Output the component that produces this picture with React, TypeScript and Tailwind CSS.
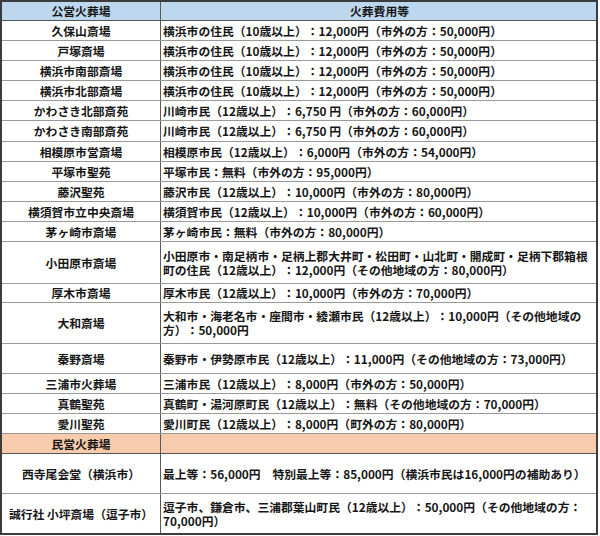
import React from "react";

type Row = {
  name: string;
  fee: React.ReactNode;
  h: string;
  kind?: "blue" | "orange";
  last?: boolean;
};

const rows: Row[] = [
  { name: "公営火葬場", fee: "火葬費用等", h: "h-[19px]", kind: "blue" },
  { name: "久保山斎場", fee: "横浜市の住民（10歳以上）：12,000円（市外の方：50,000円）", h: "h-[20px]" },
  { name: "戸塚斎場", fee: "横浜市の住民（10歳以上）：12,000円（市外の方：50,000円）", h: "h-[20px]" },
  { name: "横浜市南部斎場", fee: "横浜市の住民（10歳以上）：12,000円（市外の方：50,000円）", h: "h-[20px]" },
  { name: "横浜市北部斎場", fee: "横浜市の住民（10歳以上）：12,000円（市外の方：50,000円）", h: "h-[20px]" },
  { name: "かわさき北部斎苑", fee: "川崎市民（12歳以上）：6,750 円（市外の方：60,000円）", h: "h-[20px]" },
  { name: "かわさき南部斎苑", fee: "川崎市民（12歳以上）：6,750 円（市外の方：60,000円）", h: "h-[21px]" },
  { name: "相模原市営斎場", fee: "相模原市民（12歳以上）：6,000円（市外の方：54,000円）", h: "h-[20px]" },
  { name: "平塚市聖苑", fee: "平塚市民：無料（市外の方：95,000円）", h: "h-[20px]" },
  { name: "藤沢聖苑", fee: "藤沢市民（12歳以上）：10,000円（市外の方：80,000円）", h: "h-[20px]" },
  { name: "横須賀市立中央斎場", fee: "横須賀市民（12歳以上）：10,000円（市外の方：60,000円）", h: "h-[20px]" },
  { name: "茅ヶ崎市斎場", fee: "茅ヶ崎市民：無料（市外の方：80,000円）", h: "h-[20px]" },
  {
    name: "小田原市斎場",
    fee: (
      <>
        小田原市・南足柄市・足柄上郡大井町・松田町・山北町・開成町・足柄下郡箱根
        <br />
        町の住民（12歳以上）：12,000円（その他地域の方：80,000円）
      </>
    ),
    h: "h-[42px]",
  },
  { name: "厚木市斎場", fee: "厚木市民（12歳以上）：10,000円（市外の方：70,000円）", h: "h-[19px]" },
  {
    name: "大和斎場",
    fee: (
      <>
        大和市・海老名市・座間市・綾瀬市民（12歳以上）：10,000円（その他地域の
        <br />
        方）：50,000円
      </>
    ),
    h: "h-[41px]",
  },
  { name: "秦野斎場", fee: "秦野市・伊勢原市民（12歳以上）：11,000円（その他地域の方：73,000円）", h: "h-[30px]" },
  { name: "三浦市火葬場", fee: "三浦市民（12歳以上）：8,000円（市外の方：50,000円）", h: "h-[20px]" },
  { name: "真鶴聖苑", fee: "真鶴町・湯河原町民（12歳以上）：無料（その他地域の方：70,000円）", h: "h-[20px]" },
  { name: "愛川聖苑", fee: "愛川町民（12歳以上）：8,000円（町外の方：80,000円）", h: "h-[20px]" },
  { name: "民営火葬場", fee: "", h: "h-[20px]", kind: "orange" },
  {
    name: "西寺尾会堂（横浜市）",
    fee: "最上等：56,000円　特別最上等：85,000円（横浜市民は16,000円の補助あり）",
    h: "h-[40px]",
  },
  {
    name: "誠行社 小坪斎場（逗子市）",
    fee: (
      <>
        逗子市、鎌倉市、三浦郡葉山町民（12歳以上）：50,000円（その他地域の方：
        <br />
        70,000円）
      </>
    ),
    h: "h-[39px]",
    last: true,
  },
];

export default function App() {
  return (
    <div
      className="w-[600px] h-[536px] bg-white text-[#161616]"
      style={{ fontFamily: '"Noto Sans CJK JP", "Noto Sans", sans-serif' }}
    >
      <div className="w-[598px] border-2 border-[#3c3c3c] flex flex-col text-[11.8px] leading-[14px] font-bold [text-spacing-trim:space-all]">
        {rows.map((r, i) => {
          const bg =
            r.kind === "blue"
              ? "bg-[#bdd7ee]"
              : r.kind === "orange"
              ? "bg-[#f8cbad]"
              : "bg-white";
          const border = r.last
            ? ""
            : r.kind
            ? "border-b border-[#555555]"
            : "border-b border-[#9a9a9a]";
          return (
            <div key={i} className={`flex shrink-0 ${r.h} ${bg} ${border}`}>
              <div className="w-[159px] shrink-0 border-r border-[#5a5a5a] flex items-center justify-center whitespace-nowrap">
                {r.name}
              </div>
              <div
                className={`flex-1 flex items-center whitespace-nowrap pl-[2px] ${
                  r.kind === "blue" ? "justify-center" : ""
                }`}
              >
                <div>{r.fee}</div>
              </div>
            </div>
          );
        })}
      </div>
    </div>
  );
}
